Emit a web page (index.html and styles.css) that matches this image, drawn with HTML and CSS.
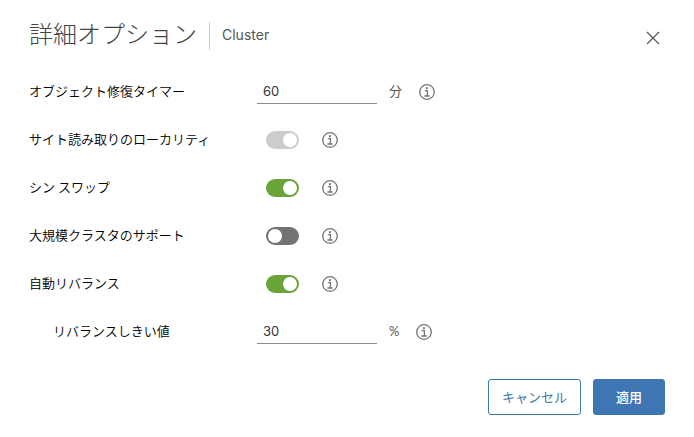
FILE: index.html
```html
<!DOCTYPE html>
<html lang="ja">
<head>
<meta charset="UTF-8" />
<meta name="viewport" content="width=device-width, initial-scale=1" />
<title>詳細オプション</title>
<link rel="stylesheet" href="styles.css">
</head>
<body>
<svg class="sprite" aria-hidden="true">
    <symbol id="info" viewBox="0 0 16 16">
        <circle cx="8" cy="8" r="7.3" fill="none" stroke="currentColor" stroke-width="1.3" />
        <circle cx="7.9" cy="4.2" r="1.1" fill="currentColor" />
        <path d="M5.8 6.6h2.6v5.2M5.4 12h5.2" fill="none" stroke="currentColor" stroke-width="1.3" />
    </symbol>
</svg>

<form class="modal">
    <header class="modal-header">
        <h1>詳細オプション</h1>
        <span class="subtitle">Cluster</span>
        <button type="button" class="close" aria-label="閉じる">
            <svg viewBox="0 0 14 14" width="14" height="14"><path d="M1 1l12 12M13 1L1 13" fill="none" stroke="currentColor" stroke-width="1.2" /></svg>
        </button>
    </header>

    <main>
        <div class="row">
            <label for="timer">オブジェクト修復タイマー</label>
            <input type="text" id="timer" class="text" value="60">
            <span class="unit">分</span>
            <svg class="info"><use href="#info" /></svg>
        </div>
        <div class="row">
            <label for="locality">サイト読み取りのローカリティ</label>
            <input type="checkbox" id="locality" class="toggle" checked disabled>
            <svg class="info"><use href="#info" /></svg>
        </div>
        <div class="row">
            <label for="swap">シン スワップ</label>
            <input type="checkbox" id="swap" class="toggle" checked>
            <svg class="info"><use href="#info" /></svg>
        </div>
        <div class="row">
            <label for="large">大規模クラスタのサポート</label>
            <input type="checkbox" id="large" class="toggle">
            <svg class="info"><use href="#info" /></svg>
        </div>
        <div class="row">
            <label for="rebalance">自動リバランス</label>
            <input type="checkbox" id="rebalance" class="toggle" checked>
            <svg class="info"><use href="#info" /></svg>
        </div>
        <div class="row">
            <label for="threshold" class="sub">リバランスしきい値</label>
            <input type="text" id="threshold" class="text" value="30">
            <span class="unit">%</span>
            <svg class="info"><use href="#info" /></svg>
        </div>
    </main>

    <footer>
        <button type="button" class="btn">キャンセル</button>
        <button type="submit" class="btn btn-primary">適用</button>
    </footer>
</form>
</body>
</html>
```
FILE: styles.css
```css
* {
    box-sizing: border-box;
}
body {
    margin: 0;
    background: #fff;
    color: #000;
    font-family: "Noto Sans CJK JP", sans-serif;
    font-size: 13px;
    line-height: 20px;
}
.sprite {
    display: none;
}
.modal {
    padding: 20px 29px;
}

/* Header */
.modal-header {
    display: flex;
    align-items: center;
    height: 32px;
    color: #565656;
}
h1 {
    align-self: flex-start;
    margin: 0;
    color: #444;
    font-size: 24px;
    font-weight: 300;
    line-height: 26px;
}
.subtitle {
    margin-left: 12px;
    padding: 0 0 2px 12px;
    border-left: 1px solid #ccc;
    font-family: Inter, sans-serif;
    font-size: 14px;
    line-height: 26px;
}
.close {
    display: flex;
    align-self: flex-end;
    margin-left: auto;
    padding: 7px 5px;
    border: 0;
    background: none;
    color: #565656;
}

/* Option rows */
main {
    padding-top: 16px;
}
.row {
    display: flex;
    align-items: center;
    height: 48px;
}
label {
    width: 228px;
    padding-bottom: 2px;
    font-weight: 350;
}
label.sub {
    padding-left: 24px;
}
.text {
    width: 120px;
    height: 24px;
    padding: 0 6px 1px;
    border: 0;
    border-bottom: 1px solid #8c8c8c;
    background: none;
    color: #333;
    font-family: Inter, sans-serif;
    font-size: 13px;
    outline: 0;
}
.unit {
    margin-left: 12px;
    padding-bottom: 2px;
    color: #565656;
    font-family: Lato, "Noto Sans CJK JP", sans-serif;
}
.info {
    width: 16px;
    height: 16px;
    margin-left: 17px;
    color: #737373;
}
.toggle {
    appearance: none;
    width: 33px;
    height: 18px;
    margin: 0 6px 0 9px;
    padding: 2px;
    border-radius: 9px;
    background: #737373;
}
.toggle::before {
    content: "";
    display: block;
    width: 14px;
    height: 14px;
    border-radius: 50%;
    background: #fff;
}
.toggle:checked {
    background: #6aa338;
}
.toggle:checked::before {
    margin-left: auto;
}
.toggle:disabled {
    background: #ccc;
}

/* Buttons */
footer {
    display: flex;
    justify-content: flex-end;
    gap: 12px;
    padding-top: 23px;
}
.btn {
    height: 36px;
    padding: 0 13px 2px;
    border: 1px solid #3b78ab;
    border-radius: 3px;
    background: #fff;
    color: #3b78ab;
    font-family: inherit;
    font-size: 13px;
}
.btn-primary {
    min-width: 72px;
    border-color: #3e76b4;
    background: #3e76b4;
    color: #fff;
    font-weight: 500;
}
```
